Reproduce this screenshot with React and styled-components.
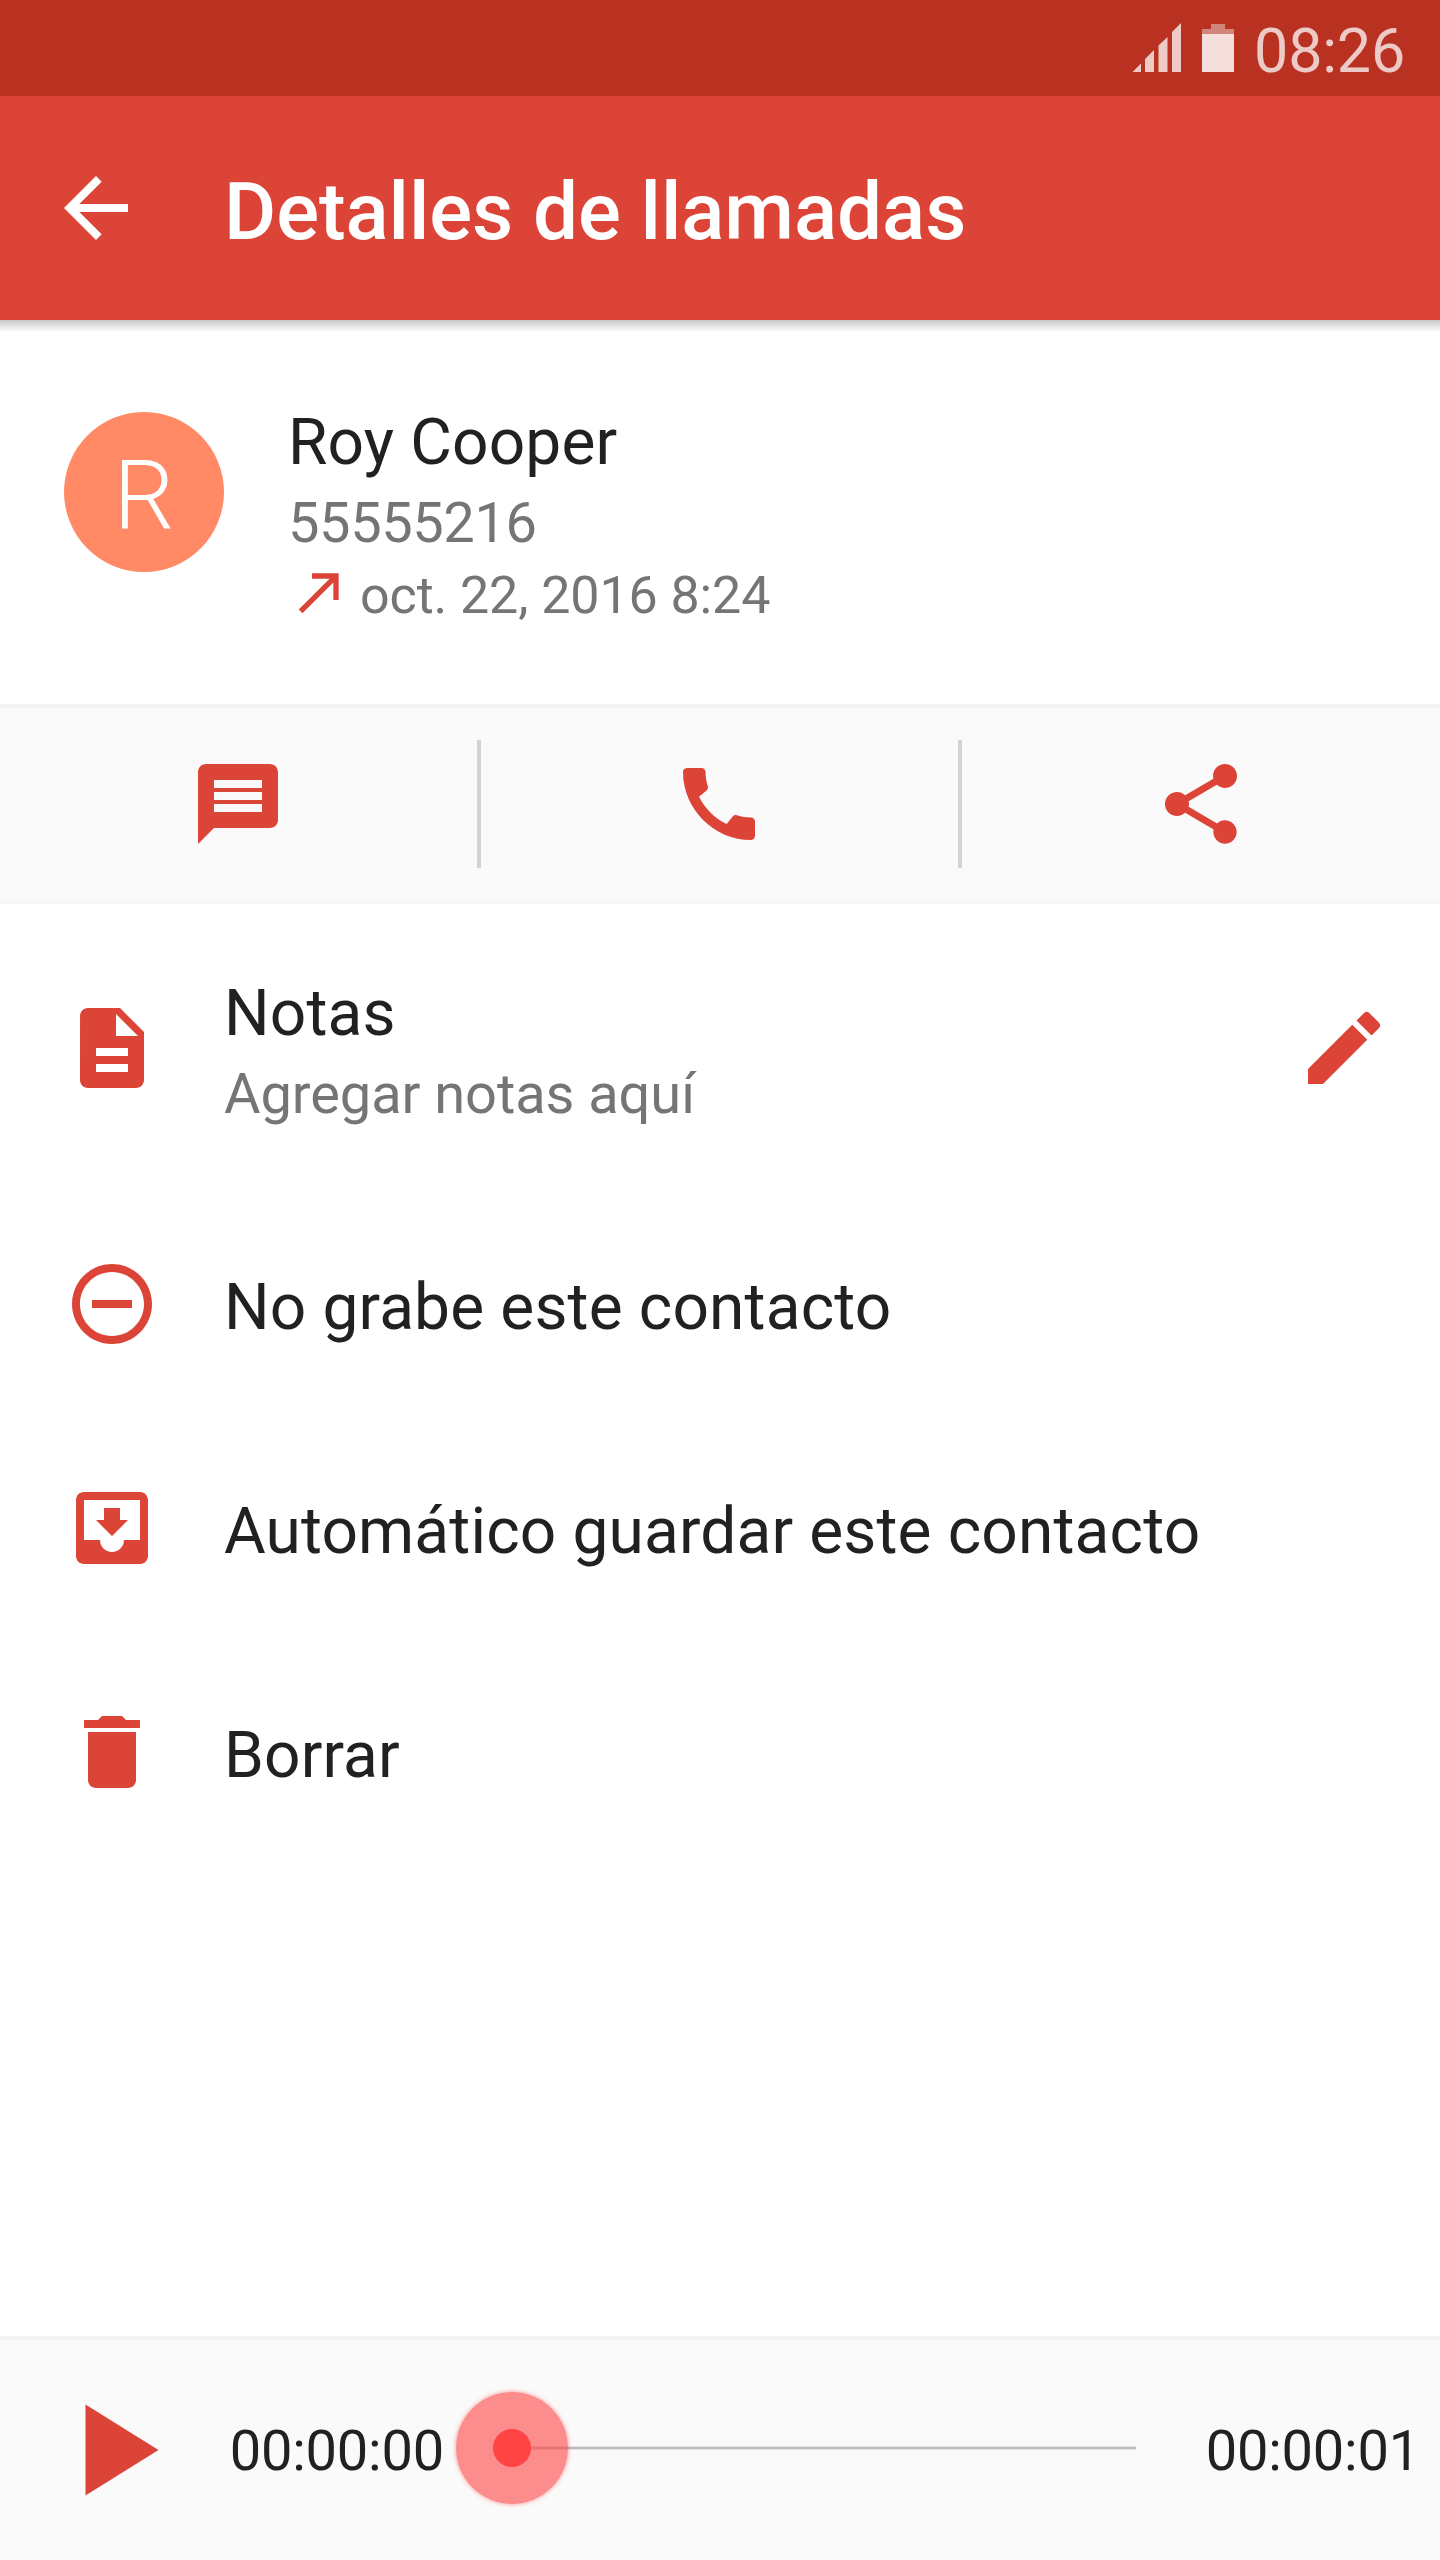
import React from "react";
import styled, { createGlobalStyle } from "styled-components";
import {
  MdArrowBack,
  MdCall,
  MdCallMade,
  MdDelete,
  MdDescription,
  MdEdit,
  MdMessage,
  MdMoveToInbox,
  MdRemoveCircleOutline,
  MdShare,
} from "react-icons/md";

const color = {
  primary: "#db4437",
  primaryDark: "#b93221",
  accent: "#ff4444",
  avatar: "#ff8a65",
  text: "#212121",
  subText: "#757575",
  bar: "#fafafa",
  line: "#f3f3f3",
  divider: "#d3d3d3",
};

const options = [
  { icon: MdRemoveCircleOutline, label: "No grabe este contacto" },
  { icon: MdMoveToInbox, label: "Automático guardar este contacto" },
  { icon: MdDelete, label: "Borrar" },
];

function SignalIcon() {
  return (
    <svg width="50" height="50" viewBox="0 0 50 50" fill="#eecac6">
      <path d="M0.5 49L9 40.5V49Z" />
      <path d="M13 49V36L22 27V49Z" />
      <path d="M26.5 49V22.5L35.5 14V49Z" />
      <path d="M40 49V9L49 0V49Z" />
    </svg>
  );
}

function BatteryIcon() {
  return (
    <svg width="32" height="48" viewBox="0 0 32 48">
      <path d="M9 0h14v5h9v5H0V5h9z" fill="#d4857b" />
      <path d="M0 10h32v38H0z" fill="#f5dfdd" />
    </svg>
  );
}

export default function App() {
  return (
    <Screen>
      <GlobalStyle />
      <StatusBar>
        <SignalIcon />
        <BatteryIcon />
        <Clock>08:26</Clock>
      </StatusBar>

      <Toolbar>
        <MdArrowBack size={96} />
        <Title>Detalles de llamadas</Title>
      </Toolbar>

      <Contact>
        <Avatar>R</Avatar>
        <div>
          <Name>Roy Cooper</Name>
          <Phone>55555216</Phone>
          <DateRow>
            <MdCallMade size={64} color={color.primary} />
            <DateText>oct. 22, 2016 8:24</DateText>
          </DateRow>
        </div>
      </Contact>

      <Actions>
        <ActionButton>
          <MdMessage size={96} />
        </ActionButton>
        <Divider />
        <ActionButton>
          <MdCall size={96} />
        </ActionButton>
        <Divider />
        <ActionButton>
          <MdShare size={96} />
        </ActionButton>
      </Actions>

      <List>
        <Row $height={288}>
          <MdDescription size={96} />
          <NoteText>
            <Label>Notas</Label>
            <Hint>Agregar notas aquí</Hint>
          </NoteText>
          <MdEdit size={96} />
        </Row>
        {options.map(({ icon: Icon, label }) => (
          <Row key={label} $height={224}>
            <Icon size={96} />
            <RowText>
              <Label>{label}</Label>
            </RowText>
          </Row>
        ))}
      </List>

      <Player>
        <PlayButton>
          <svg width="74" height="92" viewBox="0 0 74 92" fill="currentColor">
            <path d="M0.5 0.5L73.5 46L0.5 91.5Z" />
          </svg>
        </PlayButton>
        <Time>00:00:00</Time>
        <Slider>
          <Track />
          <Thumb />
        </Slider>
        <Time>00:00:01</Time>
      </Player>
    </Screen>
  );
}

// Styled Components
const GlobalStyle = createGlobalStyle`
  * {
    box-sizing: border-box;
  }

  body {
    margin: 0;
    background-color: #ffffff;
    font-family: Roboto, "Liberation Sans", sans-serif;
  }

  svg {
    display: block;
    flex-shrink: 0;
  }

  button {
    border: none;
    padding: 0;
    background: none;
    color: ${color.primary};
    cursor: pointer;
  }
`;

const Screen = styled.div`
  display: flex;
  flex-direction: column;
  width: 1440px;
  height: 2560px;
  overflow: hidden;
  background-color: #ffffff;
  color: ${color.text};
`;

const StatusBar = styled.div`
  display: flex;
  align-items: center;
  justify-content: flex-end;
  gap: 20px;
  height: 96px;
  padding-right: 35px;
  background-color: ${color.primaryDark};
`;

const Clock = styled.div`
  padding-top: 6px;
  font-size: 61px;
  line-height: 72px;
  letter-spacing: -0.2px;
  color: #eecac6;
`;

const Toolbar = styled.div`
  display: flex;
  align-items: center;
  gap: 80px;
  height: 224px;
  padding-left: 48px;
  background-color: ${color.primary};
  color: #ffffff;
`;

const Title = styled.div`
  padding-top: 7px;
  font-size: 80px;
  font-weight: 500;
  line-height: 94px;
  letter-spacing: -0.06px;
`;

const Contact = styled.div`
  display: flex;
  align-items: flex-start;
  gap: 64px;
  height: 384px;
  padding: 84px 64px 0;
  background: linear-gradient(#c8c8c8, #ffffff 12px);
`;

const Avatar = styled.div`
  display: flex;
  align-items: center;
  justify-content: center;
  width: 160px;
  height: 160px;
  margin-top: 8px;
  padding-top: 8px;
  border-radius: 50%;
  background-color: ${color.avatar};
  color: #ffffff;
  font-size: 96px;
  font-weight: 300;
`;

const Name = styled.div`
  padding-top: 1px;
  font-size: 64px;
  line-height: 76px;
  letter-spacing: 0.15px;
`;

const Phone = styled.div`
  margin-top: 8px;
  font-size: 56px;
  line-height: 68px;
  letter-spacing: -0.4px;
  color: ${color.subText};
`;

const DateRow = styled.div`
  display: flex;
  align-items: center;
  gap: 8px;
  height: 64px;
  margin-top: 3px;
`;

const DateText = styled.div`
  padding-top: 8px;
  font-size: 52px;
  line-height: 60px;
  letter-spacing: -0.1px;
  color: ${color.subText};
`;

const Actions = styled.div`
  display: grid;
  grid-template-columns: 477px 4px 477px 4px 1fr;
  align-items: center;
  height: 200px;
  border-top: 4px solid ${color.line};
  border-bottom: 4px solid #f7f7f7;
  background-color: ${color.bar};
`;

const ActionButton = styled.button`
  display: flex;
  align-items: center;
  justify-content: center;
  height: 100%;

  &:not(:last-child) {
    padding-right: 1px;
  }
`;

const Divider = styled.div`
  height: 128px;
  background-color: ${color.divider};
`;

const List = styled.div`
  flex: 1;
  color: ${color.primary};
`;

const Row = styled.div`
  display: flex;
  align-items: center;
  gap: 64px;
  height: ${({ $height }) => $height}px;
  padding: 0 48px 0 64px;
`;

const RowText = styled.div`
  flex: 1;
  padding-top: 8px;
`;

const NoteText = styled(RowText)`
  padding-top: 13px;
`;

const Label = styled.div`
  font-size: 64px;
  line-height: 80px;
  letter-spacing: 0.15px;
  color: ${color.text};
`;

const Hint = styled.div`
  font-size: 56px;
  line-height: 81px;
  letter-spacing: -0.08px;
  color: ${color.subText};
`;

const Player = styled.div`
  display: flex;
  align-items: center;
  height: 224px;
  padding: 0 20px 0 85px;
  border-top: 4px solid ${color.line};
  background-color: ${color.bar};
`;

const PlayButton = styled.button`
  margin-right: 69px;
`;

const Time = styled.div`
  width: 216px;
  padding-top: 2px;
  font-size: 56px;
  line-height: 66px;
  letter-spacing: -0.2px;
  text-align: right;
`;

const Slider = styled.div`
  position: relative;
  flex: 1;
  margin: 0 68px 4px;
`;

const Track = styled.div`
  height: 4px;
  border: solid #e2e2e2;
  border-width: 1px 0;
  background-color: #bcbcbc;
`;

/* Pressed thumb: solid dot inside a translucent halo */
const Thumb = styled.div`
  position: absolute;
  top: 50%;
  left: 0;
  width: 112px;
  height: 112px;
  border-radius: 50%;
  transform: translate(-50%, -50%);
  background: radial-gradient(
    circle,
    ${color.accent} 18.5px,
    rgba(255, 68, 68, 0.6) 19.5px
  );
  box-shadow: 0 0 4px rgba(255, 68, 68, 0.6);
`;
